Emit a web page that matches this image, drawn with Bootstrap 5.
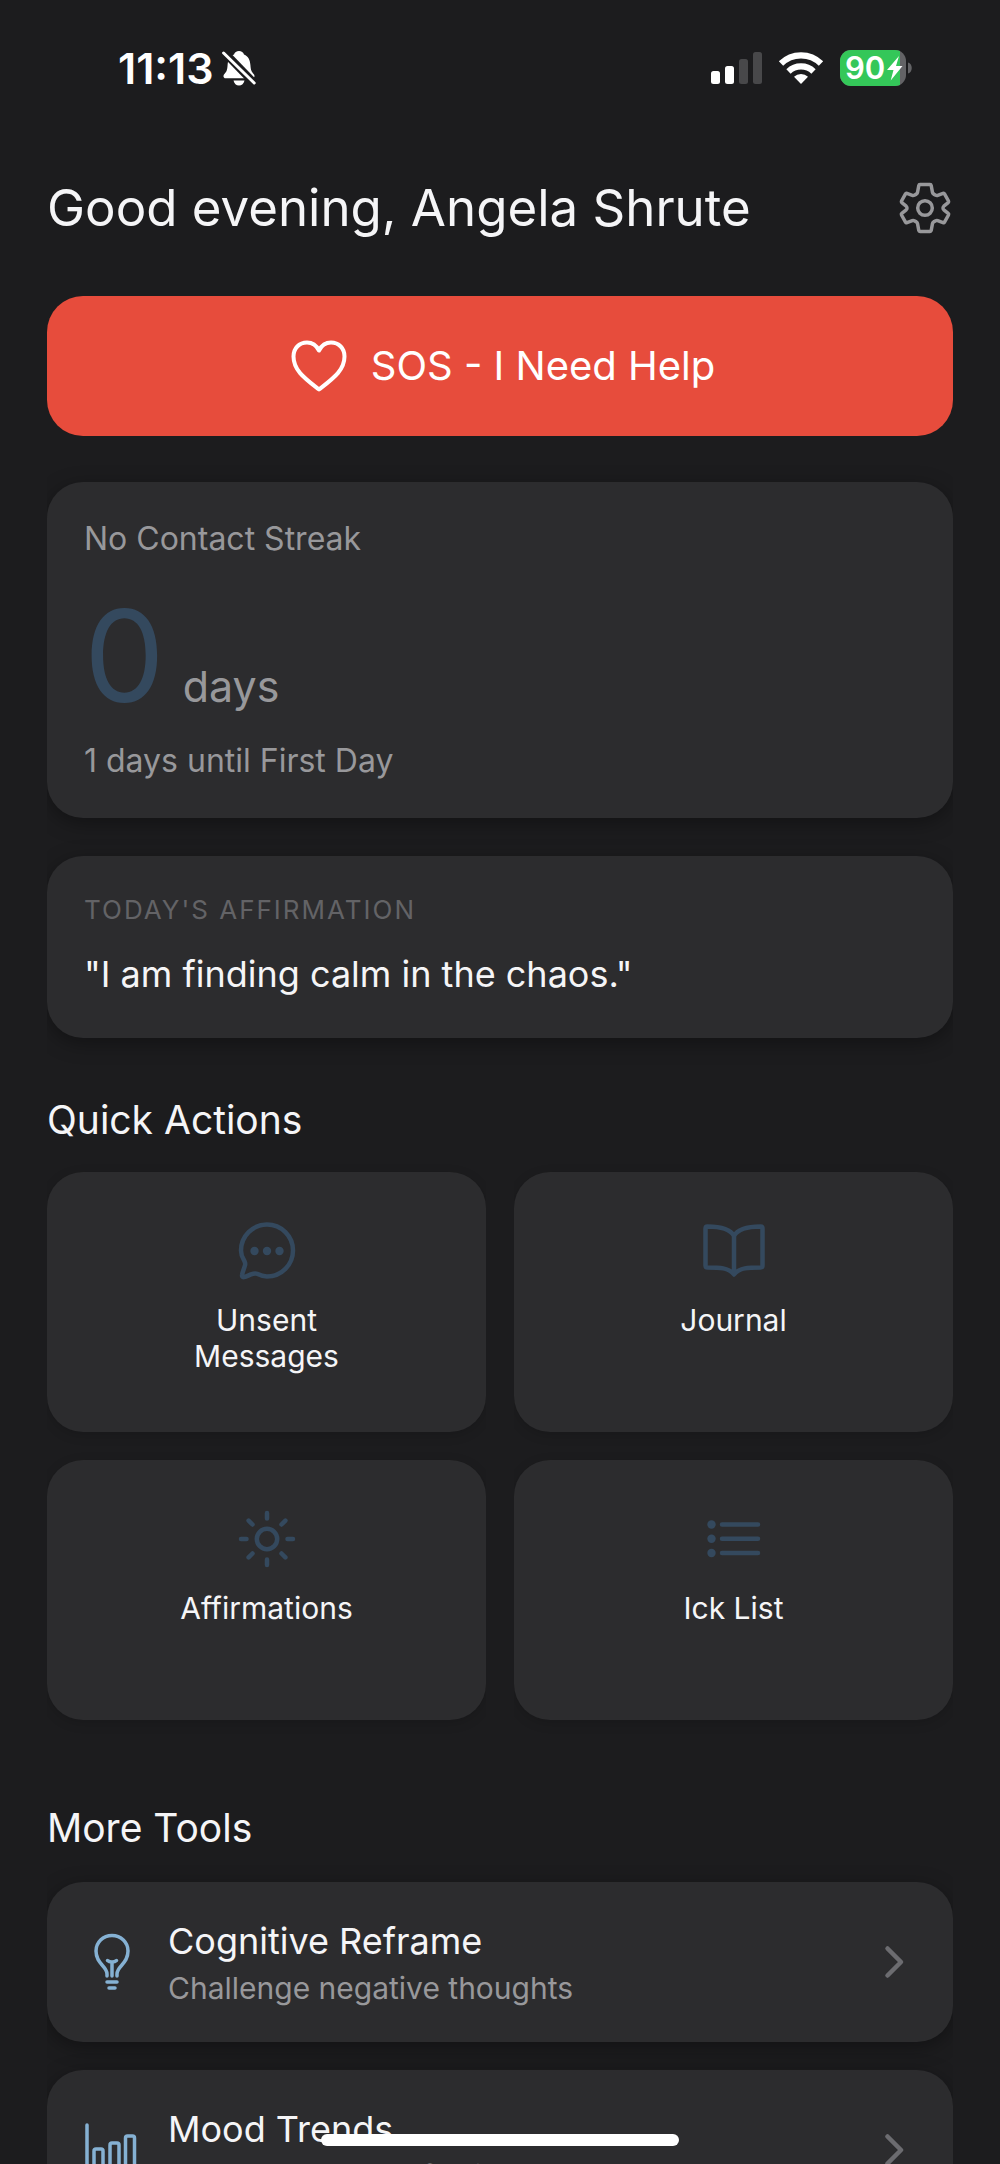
<!DOCTYPE html>
<html lang="en">
<head>
<meta charset="utf-8">
<meta name="viewport" content="width=device-width, initial-scale=1">
<title>Home</title>
<link href="https://cdn.jsdelivr.net/npm/bootstrap@5.3.0/dist/css/bootstrap.min.css" rel="stylesheet">
<style>
  :root { --ink: #f5f5f7; --muted: #98989b; --faint: #636366; --navy: #34495e; --sky: #85b1d3; --surface: #2c2c2e; }
  body { background: #1c1c1e; color: var(--ink); font-family: Inter, "Liberation Sans", sans-serif; font-size: 30px; line-height: 36px; height: 100vh; overflow: hidden; }
  svg { display: block; flex: none; }
  a { color: inherit; text-decoration: none; }
  .status-bar { height: 136px; padding: 0 86px 0 118px; color: #fff; }
  .clock { font-size: 43px; font-weight: 600; line-height: 48px; }
  .screen { padding: 0 47px; }
  .greeting { font-size: 51px; font-weight: 400; line-height: 64px; margin: 0; }
  .greeting-row { height: 144px; }
  .sos { height: 140px; padding: 0 6px 0 12px; border: 0; border-radius: 36px; background: #e74c3c; color: #fff; font-size: 40px; line-height: 48px; gap: 24px; }
  .panel { background: var(--surface); border-radius: 36px; box-shadow: 0 5px 20px rgba(0, 0, 0, .35); clip-path: inset(-30px 0); }
  .pad { padding: 36px 37px; }
  .streak { margin-top: 46px; }
  .body-text { font-size: 32px; line-height: 42px; color: var(--muted); }
  .count-row { gap: 18px; padding: 32px 0 20px; }
  .count { font-size: 128px; line-height: 128px; color: var(--navy); }
  .unit { font-size: 43px; line-height: 56px; color: var(--muted); }
  .affirmation { margin: 38px 0 58px; }
  .eyebrow { font-size: 26px; line-height: 36px; letter-spacing: 2px; color: var(--faint); }
  .quote { font-size: 36px; line-height: 48px; padding-top: 22px; margin-bottom: 4px; }
  .section-title { font-size: 39px; font-weight: 400; line-height: 48px; margin: 0; }
  .tiles { --bs-gutter-x: 28px; --bs-gutter-y: 28px; margin-top: 0; }
  .tile { height: 260px; padding-top: 44px; box-shadow: 0 3px 12px rgba(0, 0, 0, .15); }
  .tile svg { color: var(--navy); }
  .tile-label { max-width: 180px; margin-top: 18px; }
  .more-title { margin: 84px 0 30px; }
  .tools { gap: 28px; }
  .tool { height: 160px; padding: 0 44px 0 29px; gap: 20px; }
  .tool .lead-icon { color: var(--sky); }
  .tool-name { font-size: 36px; line-height: 52px; }
  .tool-note { color: var(--muted); line-height: 42px; }
  .home-bar { left: 50%; bottom: 18px; width: 358px; height: 12px; margin-left: -179px; border-radius: 6px; background: #fff; }
</style>
</head>
<body>
<header class="status-bar d-flex align-items-center justify-content-between">
  <div class="d-flex align-items-center gap-2">
    <span class="clock">11:13</span>
    <svg width="34" height="36" viewBox="0 0 34 36" aria-hidden="true">
      <path d="M17 1c2.400 0 4.400 1.400 5 3.600 4.400 1.800 6 5.600 6.400 10.400.4 5 1 6.600 3.400 9.200 1.200 1.400 1 4-1.600 4H3.600c-2.400 0-2.600-2.600-1.400-4 2.600-2.800 3-4.200 3.400-9.200C6 10.200 7.600 6.400 12 4.600 12.600 2.400 14.600 1 17 1zM11.500 30.500h11c-.6 3-2.800 5-5.500 5s-4.900-2-5.500-5z" fill="#fff"/>
      <path d="M2 2l31 32" stroke="#1c1c1e" stroke-width="8"/>
      <path d="M1.600 3l30.600 30" stroke="#fff" stroke-width="3" stroke-linecap="round"/>
    </svg>
  </div>
  <div class="d-flex align-items-center">
    <svg width="51" height="32" viewBox="0 0 51 32" aria-hidden="true">
      <g fill="#fff"><rect y="19" width="9" height="13" rx="2.500"/><rect x="14" y="14" width="9" height="18" rx="2.500"/></g>
      <g fill="#48484a"><rect x="28" y="7" width="9" height="25" rx="2.500"/><rect x="42" width="9" height="32" rx="2.500"/></g>
    </svg>
    <svg class="ms-3" width="46" height="34" viewBox="0 0 46 34" aria-hidden="true">
      <g fill="none" stroke="#fff" stroke-width="6.200"><path d="M3 12.500a28.500 28.500 0 0 1 40 0"/><path d="M10.500 20.500a18 18 0 0 1 25 0"/></g>
      <path d="M23 33l-7-7.200a10 10 0 0 1 14 0z" fill="#fff"/>
    </svg>
    <svg class="ms-3" width="74" height="36" viewBox="0 0 74 36" aria-hidden="true">
      <defs><clipPath id="cell"><rect width="66" height="36" rx="11"/></clipPath></defs>
      <g clip-path="url(#cell)"><rect width="66" height="36" fill="#636366"/><rect width="60" height="36" fill="#34c759"/></g>
      <path d="M68 12.500c5 1 5 10 0 11z" fill="#636366"/>
      <text x="5" y="29" font-family="Inter, sans-serif" font-size="31" font-weight="600" fill="#fff">90</text>
      <path d="M59 6L47 20h6.500l-2.800 10.500L62.500 16H56z" fill="#fff"/>
    </svg>
  </div>
</header>

<main class="screen">
  <div class="greeting-row d-flex align-items-center justify-content-between">
    <h1 class="greeting">Good evening, Angela Shrute</h1>
    <a href="#settings" aria-label="Settings">
      <svg width="56" height="56" viewBox="0 0 56 56" fill="none" stroke="#98989b" stroke-width="3.500" stroke-linejoin="round" aria-hidden="true">
        <path d="M23 4.500h10q1 0 1.200 1l1.300 7q.3 1 1.200 1.600l2 1.100q1 .5 2 .1l5.300-2q1-.4 1.500.5l4 7.200q.5.900-.3 1.600l-4.400 3.600q-.8.700-.8 1.800t.8 1.800l4.400 3.600q.8.700.3 1.600l-4 7.200q-.5.900-1.500.5l-5.300-2q-1-.4-2 .1l-2 1.100q-.9.600-1.200 1.600l-1.300 7q-.2 1-1.200 1H23q-1 0-1.200-1l-1.300-7q-.3-1-1.200-1.600l-2-1.100q-1-.5-2-.1l-5.300 2q-1 .4-1.500-.5l-4-7.200q-.5-.9.3-1.600l4.400-3.600q.8-.7.8-1.800t-.8-1.800l-4.400-3.600q-.8-.7-.3-1.600l4-7.200q.5-.9 1.500-.5l5.300 2q1 .4 2-.1l2-1.100q.9-.6 1.200-1.600l1.300-7q.2-1 1.200-1z"/>
        <circle cx="28" cy="28" r="7.300"/>
      </svg>
    </a>
  </div>

  <button type="button" class="sos w-100 d-flex align-items-center justify-content-center mt-3">
    <svg width="56" height="52" viewBox="0 0 56 52" fill="none" stroke="#fff" stroke-width="4" stroke-linejoin="round" aria-hidden="true">
      <path d="M28 10.500C25.500 5.500 21 2.500 16 2.500 8 2.500 2.500 8.500 2.500 16.500c0 14 11.500 22 25.500 33 14-11 25.500-19 25.500-33 0-8-5.500-14-13.500-14-5 0-9.500 3-12 8z"/>
    </svg>
    <span>SOS - I Need Help</span>
  </button>

  <section class="panel streak pad">
    <div class="body-text">No Contact Streak</div>
    <div class="count-row d-flex align-items-baseline"><span class="count">0</span><span class="unit">days</span></div>
    <div class="body-text">1 days until First Day</div>
  </section>

  <section class="panel pad affirmation">
    <div class="eyebrow">TODAY'S AFFIRMATION</div>
    <div class="quote">"I am finding calm in the chaos."</div>
  </section>

  <h2 class="section-title">Quick Actions</h2>
  <div class="row tiles">
    <div class="col-6"><a href="#unsent" class="panel tile d-flex flex-column align-items-center text-center">
      <svg width="68" height="68" viewBox="0 0 68 68" fill="none" stroke="currentColor" stroke-width="4.500" stroke-linejoin="round" aria-hidden="true">
        <path d="M34 8.500a26 26 0 1 1 0 52c-4.500 0-7-1.200-10-2.700-2-1-3.600-.4-6 .6-3 1.300-5.200 2.400-7 2.700-1.700.2-2.200-1-1.900-2.400.5-2.900 2.200-6.700 3-9.700.5-2-.2-3-1.200-5C9 41 8 38.500 8 34.500a26 26 0 0 1 26-26z"/>
        <g fill="currentColor" stroke="none"><circle cx="21.500" cy="35" r="4.200"/><circle cx="34" cy="35" r="4.200"/><circle cx="46.500" cy="35" r="4.200"/></g>
      </svg><span class="tile-label">Unsent Messages</span></a></div>
    <div class="col-6"><a href="#journal" class="panel tile d-flex flex-column align-items-center text-center">
      <svg width="68" height="68" viewBox="0 0 68 68" fill="none" stroke="currentColor" stroke-width="4.500" stroke-linejoin="round" aria-hidden="true">
        <path d="M34 20C30 12.500 20 10.500 7.500 10.500q-2 0-2 2V49.500q0 2 2 2C19 51.500 29 51.500 34 58.500 39 51.500 49 51.500 60.500 51.500q2 0 2-2V12.500q0-2-2-2C48 10.500 38 12.500 34 20zV58"/>
      </svg><span class="tile-label">Journal</span></a></div>
    <div class="col-6"><a href="#affirmations" class="panel tile d-flex flex-column align-items-center text-center">
      <svg width="68" height="68" viewBox="0 0 68 68" fill="none" stroke="currentColor" stroke-width="4.500" stroke-linecap="round" aria-hidden="true">
        <circle cx="34" cy="35" r="10.200"/>
        <path d="M34 9v5.500M34 55.500V61M8 35h5.500M54.500 35H60M15.600 16.600l3.900 3.900M48.500 49.500l3.900 3.900M15.600 53.400l3.900-3.900M48.500 20.500l3.900-3.900"/>
      </svg><span class="tile-label">Affirmations</span></a></div>
    <div class="col-6"><a href="#ick-list" class="panel tile d-flex flex-column align-items-center text-center">
      <svg width="68" height="68" viewBox="0 0 68 68" fill="none" stroke="currentColor" stroke-width="4.500" stroke-linecap="round" aria-hidden="true">
        <path d="M22 20.500h36M22 34.800h36M22 49h36"/>
        <g fill="currentColor" stroke="none"><circle cx="11.500" cy="20.500" r="4.200"/><circle cx="11.500" cy="34.800" r="4.200"/><circle cx="11.500" cy="49" r="4.200"/></g>
      </svg><span class="tile-label">Ick List</span></a></div>
  </div>

  <h2 class="section-title more-title">More Tools</h2>
  <nav class="d-flex flex-column tools" aria-label="More tools">
    <a href="#reframe" class="panel tool d-flex align-items-center">
      <svg class="lead-icon" width="72" height="64" viewBox="0 0 72 64" fill="none" stroke="currentColor" stroke-width="3.500" stroke-linecap="round" stroke-linejoin="round" aria-hidden="true">
        <path d="M31 46v-2c0-8-11-10-11-23 0-8.500 7-15.500 16-15.500S52 12.500 52 21c0 13-11 15-11 23v2M31.500 30.500c2 2 7 2 9 0M36 32v14M31 52h10M33 58h6"/>
      </svg>
      <span class="flex-grow-1"><span class="tool-name d-block">Cognitive Reframe</span><span class="tool-note d-block">Challenge negative thoughts</span></span>
      <svg width="32" height="36" viewBox="0 0 32 36" fill="none" stroke="#6c6c70" stroke-width="4.500" stroke-linecap="round" stroke-linejoin="round" aria-hidden="true"><path d="M10.500 4.500L24 18 10.500 31.500"/></svg>
    </a>
    <a href="#mood" class="panel tool d-flex align-items-center">
      <svg class="lead-icon" width="72" height="64" viewBox="0 0 72 64" fill="none" stroke="currentColor" stroke-width="3.500" stroke-linecap="round" stroke-linejoin="round" aria-hidden="true">
        <path d="M11 7v46q0 4 4 4H60"/><rect x="18" y="31" width="9" height="22" rx="2"/><rect x="34" y="25" width="9" height="28" rx="2"/><rect x="49.500" y="18" width="9" height="35" rx="2"/>
      </svg>
      <span class="flex-grow-1"><span class="tool-name d-block">Mood Trends</span><span class="tool-note d-block">Track how you're feeling</span></span>
      <svg width="32" height="36" viewBox="0 0 32 36" fill="none" stroke="#6c6c70" stroke-width="4.500" stroke-linecap="round" stroke-linejoin="round" aria-hidden="true"><path d="M10.500 4.500L24 18 10.500 31.500"/></svg>
    </a>
  </nav>
</main>
<div class="home-bar position-fixed"></div>
<script src="https://cdn.jsdelivr.net/npm/bootstrap@5.3.0/dist/js/bootstrap.bundle.min.js"></script>
</body>
</html>
